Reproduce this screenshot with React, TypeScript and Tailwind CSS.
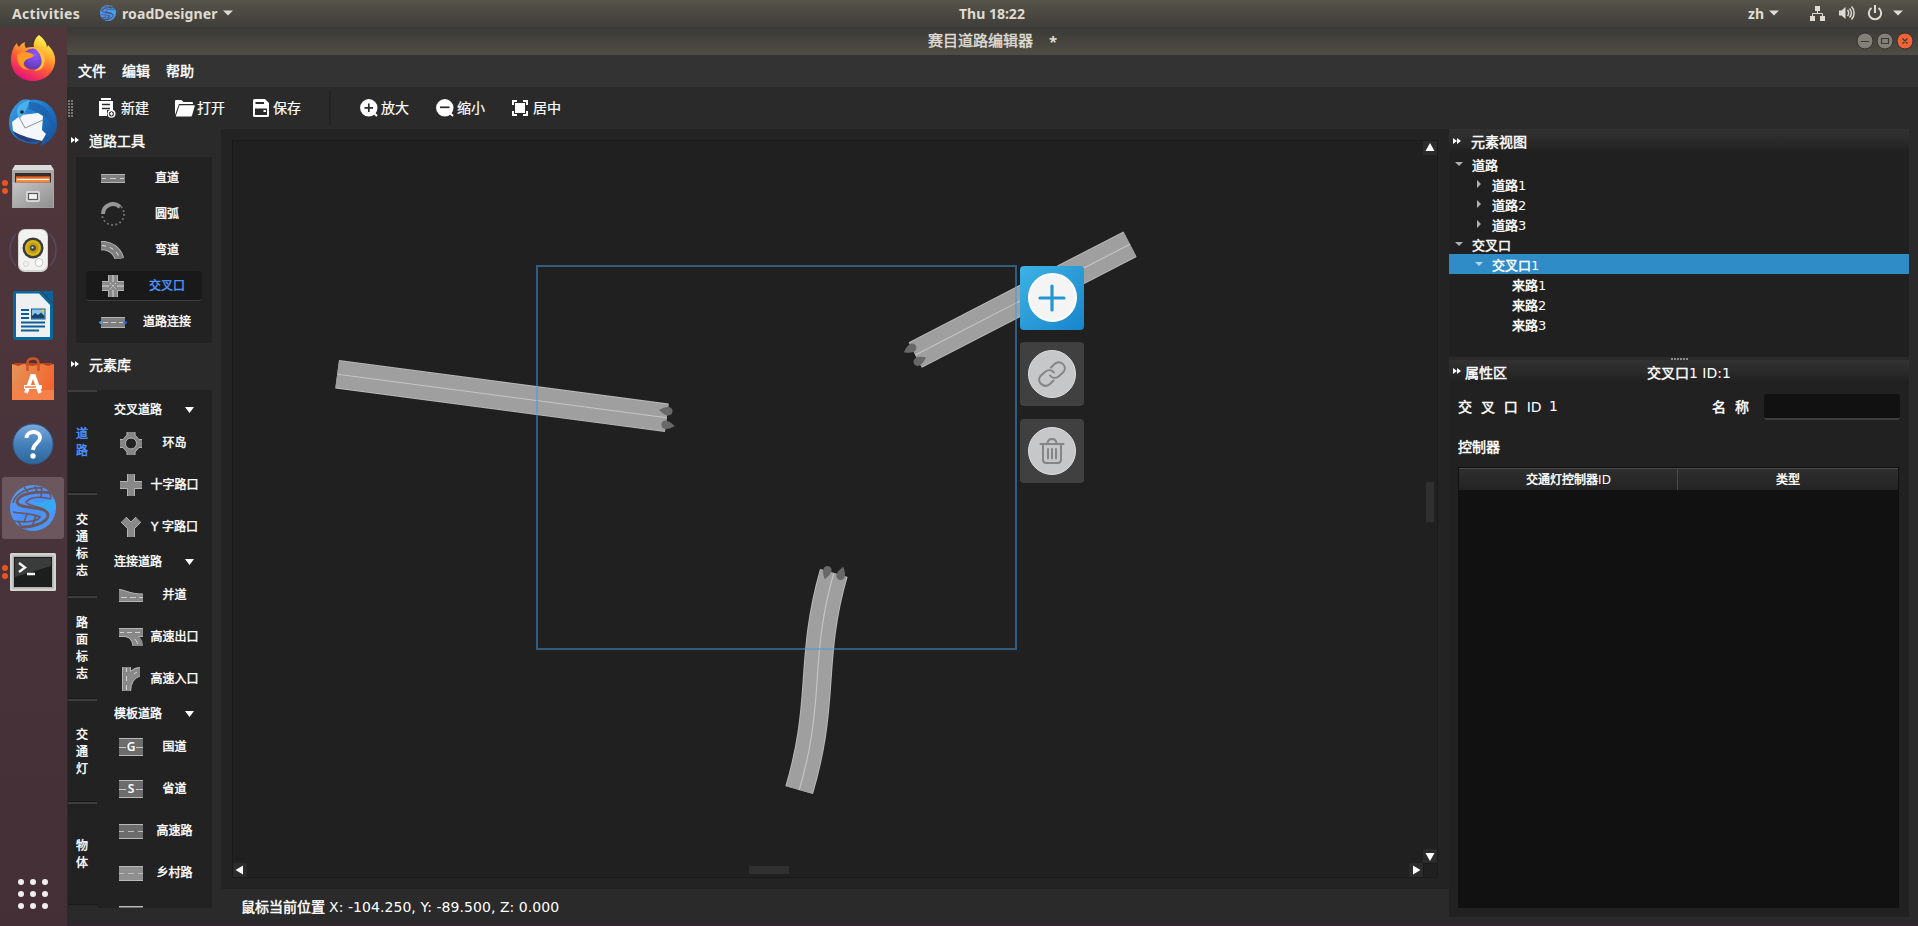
import React from "react";

const CJK = /([\u4e00-\u9fff]+)/;

function Mix({ text }: { text: string }) {
  return (
    <span className="whitespace-pre">
      {text.split(CJK).map((part, i) =>
        CJK.test(part) ? (
          <span key={i} className="[-webkit-text-stroke:0.45px_currentColor]">{part}</span>
        ) : (
          <span key={i}>{part}</span>
        ),
      )}
    </span>
  );
}

function Triangle({ className = "" }: { className?: string }) {
  return (
    <svg className={className} width="10" height="6" viewBox="0 0 10 6">
      <path d="M0 .5H10L5 5.5Z" fill="currentColor" />
    </svg>
  );
}

/* ---------- brand logo ---------- */

function Logo({ size }: { size: number }) {
  const bg = size > 20 ? "#6b575d" : "#4a4740";
  return (
    <svg width={size} height={size} viewBox="0 0 46 46">
      <defs>
        <linearGradient id="lg" x1="0" y1="0" x2="1" y2="1">
          <stop offset="0" stopColor="#5a9cf5" />
          <stop offset="0.5" stopColor="#4b90ff" />
          <stop offset="1" stopColor="#4a9af0" />
        </linearGradient>
        <clipPath id="lc"><circle cx="23" cy="23" r="23" /></clipPath>
      </defs>
      <g clipPath="url(#lc)">
        <rect width="46" height="46" fill="url(#lg)" />
        <path d="M20 17C30 18 38 15 46 14V24L38 27C34 22 26 21 20 17Z" fill="#35a9f4" />
        <g fill="none" stroke={bg}>
          <path d="M46 9C30 5 8 8 7 17C8 25 37 20 38 30C38 38 22 43 6 42" strokeWidth="2.800" />
          <path d="M41 14C30 11 20 12 16 17C18 22 34 21 37 27" strokeWidth="1.600" />
          <path d="M32 3C17 2 5 9 3 18" strokeWidth="1.800" />
          <path d="M3 27C12 29 22 28 30 32C28 36 18 38 3 36" strokeWidth="1.700" />
          <path d="M14 2L18 7M25 1L27 7M32 2L31 12M39 4L41 13M17 29L14 37M26 30L22 42M8 36L12 43" strokeWidth="1.600" />
        </g>
      </g>
    </svg>
  );
}

/* ---------- dock ---------- */

const Firefox = () => (
  <svg width="46" height="48" viewBox="0 0 46 48">
    <defs>
      <linearGradient id="ff" x1="0.8" y1="0.1" x2="0.35" y2="1">
        <stop offset="0" stopColor="#fff44f" />
        <stop offset="0.3" stopColor="#ffb02e" />
        <stop offset="0.6" stopColor="#ff5b36" />
        <stop offset="1" stopColor="#e5107c" />
      </linearGradient>
      <radialGradient id="ffp" cx="0.6" cy="0.3" r="0.8">
        <stop offset="0" stopColor="#9059ff" />
        <stop offset="1" stopColor="#5b33a8" />
      </radialGradient>
    </defs>
    <path d="M29 1C34 5 37 9 37 14C37 12 38 12 38 11C43 16 46 22 45 29C43 40 34 47 23 47C10 47 1 38 1 26C1 18 4 12 7 9C7 11 8 12 9 13C11 10 13 9 15 8C14 11 15 13 16 14C18 13 21 13 24 13C23 8 26 3 29 1Z" fill="url(#ff)" />
    <circle cx="23" cy="25" r="10.500" fill="url(#ffp)" />
    <path d="M7 21C12 17 18 17 24 21C22 25 17 24 15 27C12 30 14 34 20 36C11 36 7 30 7 21Z" fill="#ff9a25" />
    <path d="M24 14C32 15 37 22 34 30C33 35 29 37 24 37C30 34 33 30 31 24C30 19 27 16 24 14Z" fill="#ffbd3e" />
  </svg>
);

const Thunderbird = () => (
  <svg width="48" height="48" viewBox="0 0 48 48">
    <defs>
      <linearGradient id="tb" x1="0" y1="0" x2="1" y2="1">
        <stop offset="0" stopColor="#3ea2e6" />
        <stop offset="0.5" stopColor="#1b76c8" />
        <stop offset="1" stopColor="#1a4a90" />
      </linearGradient>
    </defs>
    <path d="M9 5C13 0 19 1 21 2C36 0 48 10 48 26C48 36 42 44 31 48C33 45 34 42 34 40L28 46C8 45 0 36 0 25C0 16 4 9 9 5Z" fill="url(#tb)" />
    <path d="M20 4C33 4 43 12 45 30C41 22 34 15 20 11Z" fill="#1c5ea8" opacity=".7" />
    <path d="M3 24L12 17 29 15 34 18 33 32 37 36 33 43C20 41 7 37 4 33Z" fill="#f4f6f9" />
    <path d="M4 33C12 38 24 41 33 43L20 44C12 42 6 39 4 33Z" fill="#2a3d78" />
    <path d="M10 19L16 30 34 22" fill="none" stroke="#8a949f" strokeWidth="1" />
    <path d="M10 8C13 4 20 2 21 2C18 9 17 15 11 20C7 18 7 12 10 8Z" fill="#4ab0ea" />
    <circle cx="13" cy="14" r="1.800" fill="#123" />
  </svg>
);

const Files = () => (
  <svg width="44" height="46" viewBox="0 0 44 46">
    <defs>
      <linearGradient id="fl" x1="0" y1="0" x2="1" y2="1">
        <stop offset="0" stopColor="#c4c4c4" />
        <stop offset="1" stopColor="#8f8f8f" />
      </linearGradient>
    </defs>
    <path d="M4 1H40L43 6V44H1V6Z" fill="#dcdcdc" />
    <path d="M1 6H43V44H1Z" fill="#a8a8a8" />
    <rect x="4" y="9" width="36" height="11" fill="#382d2a" />
    <path d="M5 12H39V20H5Z" fill="#c5461b" />
    <path d="M5 13.500H39V18H5Z" fill="#f0873a" />
    <path d="M6 15.500H38" stroke="#fff" strokeWidth="1.200" />
    <rect x="2" y="18.500" width="40" height="25" fill="url(#fl)" />
    <rect x="15" y="27" width="14" height="11" rx="2" fill="#d9d9d9" />
    <rect x="17.500" y="29.500" width="9" height="6" fill="#f3f3f3" stroke="#5a5a5a" strokeWidth="1.200" />
  </svg>
);

const Speaker = () => (
  <svg width="48" height="46" viewBox="0 0 48 46">
    <g fill="none" stroke="#5b5674" strokeWidth="1.500" opacity=".6">
      <path d="M7 6C-1 15-1 29 7 38M4 10C0 17 0 27 4 34M41 6C49 15 49 29 41 38M44 10C48 17 48 27 44 34" />
    </g>
    <rect x="9" y="1" width="30" height="43" rx="7" fill="#d4d4d2" />
    <rect x="10" y="2" width="28" height="40" rx="6" fill="#f2f2f0" />
    <circle cx="24" cy="20" r="10.500" fill="#3c3c3c" />
    <circle cx="24" cy="20" r="8" fill="#d8b614" />
    <circle cx="24" cy="20" r="5.600" fill="#bf9c0f" />
    <circle cx="24" cy="20" r="3" fill="#45484c" />
    <circle cx="23.500" cy="19.500" r="1" fill="#ddd" />
    <circle cx="30" cy="34.500" r="4" fill="#fff" stroke="#c4c4c4" />
    <circle cx="17" cy="36" r="2.500" fill="none" stroke="#d6d6d6" />
  </svg>
);

const Writer = () => (
  <svg width="40" height="49" viewBox="0 0 40 49">
    <path d="M2 0H27L40 13V46A3 3 0 0 1 37 49H3A3 3 0 0 1 0 46V2A2 2 0 0 1 2 0Z" fill="#05689f" />
    <path d="M28 0H40V12Z" fill="#0b6198" />
    <path d="M3 2.500H26L37 14V46H3Z" fill="#eef0f1" />
    <path d="M8 19H16M8 23H16M8 27H16M8 31.500H32M8 35.500H32M8 39.500H26" stroke="#0c5f96" strokeWidth="1.800" />
    <rect x="18.500" y="18" width="13.500" height="10" fill="#8fc4e8" stroke="#0c5f96" />
    <path d="M19 27.500V25L22 22 25 24 28 21.500 31.500 25V27.500Z" fill="#16466b" />
    <circle cx="30" cy="20" r="1.400" fill="#f2c230" />
  </svg>
);

const Software = () => (
  <svg width="42" height="44" viewBox="0 0 42 44">
    <defs>
      <linearGradient id="sw" x1="0" y1="0" x2="1" y2="0.4">
        <stop offset="0" stopColor="#e5955c" />
        <stop offset="1" stopColor="#f1682e" />
      </linearGradient>
    </defs>
    <path d="M2 6H40L42 12H0Z" fill="#bf4415" />
    <path d="M0 7L6 9 12 7 20 9 30 7 36 9 42 7V43H0Z" fill="url(#sw)" />
    <path d="M0 33H42V43H0Z" fill="#f4824a" />
    <path d="M15.500 14V6C15.500 0 26.500 0 26.500 6V14" fill="none" stroke="#cf5426" strokeWidth="2.600" />
    <path d="M14 36L20 19H22L28 36M12 30H30" fill="none" stroke="#fff" strokeWidth="3.800" />
    <path d="M13 30H24" stroke="#e9622d" strokeWidth="1.300" />
  </svg>
);

const Help = () => (
  <svg width="42" height="42" viewBox="0 0 42 42">
    <defs>
      <linearGradient id="hp" x1="0" y1="0" x2="0" y2="1">
        <stop offset="0" stopColor="#7ba9dc" />
        <stop offset="0.5" stopColor="#4581bb" />
        <stop offset="1" stopColor="#2d659a" />
      </linearGradient>
    </defs>
    <circle cx="21" cy="21" r="20" fill="url(#hp)" stroke="#2c5f8e" />
    <path d="M14.500 15C14.500 7 28.500 7 28 15C28 20 21.500 20 21 27" fill="none" stroke="#fff" strokeWidth="3.800" />
    <circle cx="21" cy="33" r="2.700" fill="#fff" />
  </svg>
);

const Terminal = () => (
  <svg width="46" height="38" viewBox="0 0 46 38">
    <rect width="46" height="38" rx="1.500" fill="#d3d3cf" />
    <rect x="2.500" y="2.500" width="41" height="33" fill="#b0b0ac" />
    <rect x="4" y="4" width="38" height="30" fill="#1c1e1e" />
    <path d="M5 5H41V13L5 24Z" fill="#3a3c3c" />
    <path d="M9 10L15 14.500 9 19M17 21H25" fill="none" stroke="#f3f3f3" strokeWidth="2.400" />
  </svg>
);

const dockItems: { icon: React.ReactNode; dots: number; active?: boolean }[] = [
  { icon: <Firefox />, dots: 0 },
  { icon: <Thunderbird />, dots: 0 },
  { icon: <Files />, dots: 2 },
  { icon: <Speaker />, dots: 0 },
  { icon: <Writer />, dots: 0 },
  { icon: <Software />, dots: 0 },
  { icon: <Help />, dots: 0 },
  { icon: <Logo size={46} />, dots: 1, active: true },
  { icon: <Terminal />, dots: 2 },
];

function Dock() {
  return (
    <aside className="flex w-[67px] shrink-0 flex-col bg-linear-to-b from-[#51373b] via-[#49343b] to-[#442f36]">
      <div className="-mt-px flex flex-col">
        {dockItems.map((d, i) => (
          <div key={i} className="flex h-[64.25px] shrink-0 items-center">
            <div className="flex w-0 flex-col items-start gap-[2px]">
              {Array.from({ length: d.dots }).map((_, k) => (
                <i key={k} className="ml-[2px] size-[6px] shrink-0 rounded-full bg-[#e95420]" />
              ))}
            </div>
            <div className={`ml-[2px] flex size-[62px] items-center justify-center rounded-[3px] ${d.active ? "bg-[#6b575d]" : ""}`}>
              {d.icon}
            </div>
          </div>
        ))}
      </div>
      <div className="mt-auto mb-[17px] ml-[18px] grid w-[30px] grid-cols-3 gap-[6px]">
        {Array.from({ length: 9 }).map((_, k) => (
          <i key={k} className="size-[6px] rounded-full bg-[#f0eeee]" />
        ))}
      </div>
    </aside>
  );
}

/* ---------- road glyphs ---------- */

const G = "#7f7f7f";
const E = "#b4b4b4";

const roadIcons: Record<string, React.ReactNode> = {
  straight: (
    <svg width="24" height="9" viewBox="0 0 24 9">
      <rect width="24" height="9" fill={G} />
      <path d="M0 .5H24M0 8.500H24" stroke={E} />
      <path d="M1 4.500H5M9 4.500H15M19 4.500H23" stroke="#d0d0d0" />
    </svg>
  ),
  arc: (
    <svg width="24" height="24" viewBox="0 0 24 24" fill="none">
      <circle cx="12" cy="12" r="11" stroke="#777" strokeWidth="1.800" strokeDasharray="1.800 2.520" />
      <path d="M2 12A10 10 0 0 1 19 5" stroke="#222" strokeWidth="6" />
      <path d="M2 12A10 10 0 0 1 19 5" stroke="#979797" strokeWidth="4" />
    </svg>
  ),
  curve: (
    <svg width="24" height="18" viewBox="0 0 24 18" fill="none">
      <path d="M0 4.500C9 4.500 16 9 18.500 18" stroke={E} strokeWidth="9.500" />
      <path d="M0 4.500C9 4.500 16 9 18.500 18" stroke={G} strokeWidth="7.600" />
      <path d="M1 4.500C9 5 15 9 17.500 15" stroke="#ddd" strokeDasharray="4 4" />
    </svg>
  ),
  cross: (
    <svg width="22" height="22" viewBox="0 0 22 22">
      <path d="M6 0H16V6H22V16H16V22H6V16H0V6H6Z" fill="#8a8a8a" />
      <path d="M11 0V7M11 15V22M0 11H7M15 11H22" stroke="#d8d8d8" />
      <path d="M6.500 0V6.500H0M15.500 0V6.500H22M6.500 22V15.500H0M15.500 22V15.500H22" stroke="#b4b4b4" fill="none" />
      <path d="M8 8L14 14M14 8L8 14" stroke="#d0d0d0" strokeDasharray="1.500 1" />
    </svg>
  ),
  connect: (
    <svg width="28" height="11" viewBox="0 0 28 11">
      <rect x="2" width="24" height="11" fill={G} />
      <path d="M2 .5H26M2 10.500H26" stroke={E} />
      <path d="M4 5.500H9M12 5.500H17M20 5.500H24" stroke="#d0d0d0" />
      <circle cx="1.800" cy="5.500" r="1.600" fill="#3ea0f5" />
      <circle cx="26.300" cy="5.500" r="1.600" fill="#2569f0" />
    </svg>
  ),
  roundabout: (
    <svg width="22" height="23" viewBox="0 0 22 23">
      <path d="M7 0H15V3L19 7.500H22V15.500H19L15 20V23H7V20L3 15.500H0V7.500H3L7 3Z" fill="#858585" />
      <path d="M7 0V3L3 7.500H0M15 0V3L19 7.500H22M22 15.500H19L15 20V23M0 15.500H3L7 20V23" fill="none" stroke={E} />
      <circle cx="11" cy="11.500" r="5.500" fill="#222" stroke={E} />
    </svg>
  ),
  plus: (
    <svg width="22" height="22" viewBox="0 0 22 22">
      <path d="M7 0H15V7H22V15H15V22H7V15H0V7H7Z" fill="#888" />
      <path d="M7.500 0V7.500H0M14.500 0V7.500H22M7.500 22V14.500H0M14.500 22V14.500H22" stroke={E} fill="none" />
    </svg>
  ),
  wye: (
    <svg width="20" height="20" viewBox="0 0 20 20">
      <path d="M0 5L5 0 10 5 15 0 20 5 14 11V20H6V11Z" fill="#888" />
      <path d="M0 5L6.500 11.500V20M20 5L13.500 11.500V20M5 0L10 5 15 0" stroke={E} fill="none" />
    </svg>
  ),
  merge: (
    <svg width="24" height="13" viewBox="0 0 24 13">
      <path d="M0 0C8 1 11 5 24 5V13H0Z" fill="#888" />
      <path d="M0 .5C8 1.500 11 5 24 5M0 12.500H24" stroke={E} fill="none" />
      <path d="M2 8.500H8M11 8.500H17M20 8.500H24" stroke="#ccc" />
    </svg>
  ),
  exit: (
    <svg width="24" height="18" viewBox="0 0 24 18">
      <path d="M0 0H24V8.500H20Q24 12 24 18H14Q13 10 6 9H0Z" fill="#888" />
      <path d="M0 .5H24M0 8.500H7Q13 10 14 18M19 8.500H24" stroke={E} fill="none" />
      <path d="M1 4.500H5M8 4.500H13M16 4.500H21M16 11L19 16" stroke="#d4d4d4" />
    </svg>
  ),
  entry: (
    <svg width="18" height="24" viewBox="0 0 18 24">
      <path d="M0 0H9V4Q12 0 18 0V9Q9 12 9 24H0Z" fill="#888" />
      <path d="M.5 0V24M8.500 0V5M8.500 24Q9 12 18 9M9 4Q12 1 18 .5" stroke={E} fill="none" />
      <path d="M4.500 1V5M4.500 9V14M4.500 18V23M12 7L15 5" stroke="#d4d4d4" />
    </svg>
  ),
};

function Plate({ letter, tall, light }: { letter?: string; tall?: boolean; light?: boolean }) {
  return (
    <div
      className={`flex w-[24px] items-center justify-center border-y border-[#b9b9b9] ${tall ? "h-[18px]" : "h-[15px]"} ${light ? "bg-[#8f8f8f]" : "bg-[#6c6c6c]"}`}
    >
      {letter ? (
        <>
          <i className="h-px flex-1 bg-[#c8c8c8]" />
          <span className="w-[10px] text-center font-['Noto_Sans'] text-[12px] leading-none font-semibold text-white [-webkit-text-stroke:0px]">{letter}</span>
          <i className="h-px flex-1 bg-[#c8c8c8]" />
        </>
      ) : (
        <span className="flex w-full justify-between">
          <i className="h-px w-[5px] bg-[#bdbdbd]" />
          <i className="h-px w-[6px] bg-[#bdbdbd]" />
          <i className="h-px w-[5px] bg-[#bdbdbd]" />
        </span>
      )}
    </div>
  );
}

/* ---------- left panel ---------- */

function Chevrons() {
  return (
    <svg width="8" height="6" viewBox="0 0 8 6" fill="#fff">
      <path d="M0 0L4 3 0 6ZM4 0L8 3 4 6Z" />
    </svg>
  );
}

const tools = [
  { icon: "straight", label: "直道" },
  { icon: "arc", label: "圆弧" },
  { icon: "curve", label: "弯道" },
  { icon: "cross", label: "交叉口", on: true },
  { icon: "connect", label: "道路连接" },
];

const groups: { title: string; items: [React.ReactNode, string][] }[] = [
  {
    title: "交叉道路",
    items: [
      [roadIcons.roundabout, "环岛"],
      [roadIcons.plus, "十字路口"],
      [roadIcons.wye, "Y 字路口"],
    ],
  },
  {
    title: "连接道路",
    items: [
      [roadIcons.merge, "并道"],
      [roadIcons.exit, "高速出口"],
      [roadIcons.entry, "高速入口"],
    ],
  },
  {
    title: "模板道路",
    items: [
      [<Plate letter="G" tall />, "国道"],
      [<Plate letter="S" tall />, "省道"],
      [<Plate />, "高速路"],
      [<Plate light />, "乡村路"],
      [<Plate tall />, ""],
    ],
  },
];

const tabs = ["道路", "交通标志", "路面标志", "交通灯", "物体"];

function LeftPanel() {
  return (
    <div className="flex w-[154px] shrink-0 flex-col bg-[#2a2a2a] [-webkit-text-stroke:0.4px_currentColor]">
      <div className="flex h-[28px] items-center pb-[6px] pl-[4px] text-[14px]">
        <Chevrons />
        <span className="mt-px ml-[10px] leading-none">道路工具</span>
      </div>
      <div className="ml-[9px] flex h-[186px] w-[136px] flex-col bg-[#222] pt-[3px]">
        {tools.map((t) => (
          <div key={t.label} className="flex h-[36px] shrink-0 items-center px-[10px]">
            <div
              className={`flex h-[30px] w-[116px] items-center rounded-[4px] ${t.on ? "border-b border-[#3d3d3d] bg-[#191919] text-[#4d96ff]" : ""}`}
            >
              <span className="ml-[13px] flex w-[28px] justify-center">{roadIcons[t.icon]}</span>
              <span className="ml-[10px] w-[60px] text-center text-[12px] leading-none">{t.label}</span>
            </div>
          </div>
        ))}
      </div>
      <div className="flex h-[47px] items-center pb-[5px] pl-[4px] text-[14px]">
        <Chevrons />
        <span className="mt-px ml-[10px] leading-none">元素库</span>
      </div>
      <div className="ml-[1px] flex h-[518px]">
        <div className="flex w-[29px] flex-col">
          {tabs.map((t, i) => (
            <div
              key={t}
              className={`flex h-[103px] shrink-0 flex-col items-center justify-center border-t-2 border-b border-t-[#3d3d3d] border-b-[#191919] bg-[#222] pt-[2px] pr-px text-[12px] leading-[17px] ${i === 0 ? "text-[#4d96ff]" : ""}`}
            >
              {t.split("").map((c) => (
                <span key={c}>{c}</span>
              ))}
            </div>
          ))}
        </div>
        <div className="w-[115px] overflow-hidden bg-[#222] pt-[7px]">
          {groups.map((g) => (
            <div key={g.title}>
              <div className="flex h-[25px] items-center pl-[17px] text-[12px]">
                <span className="leading-none">{g.title}</span>
                <svg className="ml-[23px]" width="9" height="6" viewBox="0 0 9 6">
                  <path d="M0 0H9L4.500 6Z" fill="#fff" />
                </svg>
              </div>
              <div className="mb-px">
                {g.items.map(([icon, label], i) => (
                  <div key={i} className="flex h-[42px] items-center">
                    <span className="ml-[20px] flex w-[28px] justify-center">{icon}</span>
                    <span className="ml-px w-[57px] text-center text-[12px] leading-none whitespace-pre">
                      {label}
                    </span>
                  </div>
                ))}
              </div>
            </div>
          ))}
        </div>
      </div>
    </div>
  );
}

/* ---------- canvas ---------- */

function Road({ d }: { d: string }) {
  return (
    <g fill="none">
      <path d={d} stroke="#bcbcbc" strokeWidth="28.800" />
      <path d={d} stroke="#9f9f9f" strokeWidth="27" />
      <path d={d} stroke="#c6c6c6" strokeWidth="1.100" />
    </g>
  );
}

function Drop({ x, y, a }: { x: number; y: number; a: number }) {
  return (
    <path
      transform={`translate(${x} ${y}) rotate(${a})`}
      d="M8 0C4 -3 1 -4.400 -1.500 -4.200C-7 -4 -7 4 -1.500 4.200C1 4.400 4 3 8 0Z"
      fill="#686868"
    />
  );
}

function Canvas() {
  return (
    <div className="relative h-[760px] w-[1228px] bg-[#232323]">
      <svg width="1228" height="760" viewBox="221 129 1228 760">
        <rect x="232.500" y="140.500" width="1205" height="737" fill="#202020" stroke="#191919" />
        <Road d="M337.200 374.200L666.800 417.800" />
        <Road d="M915.300 355L1130 244.200" />
        <Road d="M833.800 573C821 617 819 652 817 682C814.500 720 811 750 799.200 790" />
        <Drop x={667} y={411} a={188} />
        <Drop x={667} y={425} a={8} />
        <Drop x={911} y={348.5} a={153} />
        <Drop x={919} y={361} a={-27} />
        <Drop x={827} y={571.5} a={106} />
        <Drop x={841} y={574.5} a={-74} />
        <rect x="537" y="266" width="479" height="383" fill="none" stroke="#3f99e0" strokeOpacity=".5" strokeWidth="2" />
        <g fill="#2b2b2b">
          <rect x="1423" y="141" width="14" height="14" />
          <rect x="1423" y="849" width="14" height="14" />
          <rect x="1409" y="863" width="14" height="14" />
          <rect x="233" y="863" width="14" height="14" />
        </g>
        <g fill="#303030">
          <rect x="1426" y="482" width="8" height="40" />
          <rect x="749" y="866" width="40" height="8" />
        </g>
        <g fill="#fff">
          <path d="M1425.500 151L1430 143 1434.500 151Z" />
          <path d="M1425.500 853L1430 861 1434.500 853Z" />
          <path d="M1413 865.500L1420.500 870 1413 874.500Z" />
          <path d="M243 865.500L235.500 870 243 874.500Z" />
        </g>
        <path d="M1423.500 877V863.500H1437" fill="none" stroke="#191919" />
      </svg>
      <div className="absolute top-[136.5px] left-[799.4px] flex flex-col gap-[12.8px]">
        <div className="flex size-[64px] items-center justify-center rounded-[4px] bg-linear-to-br from-[#3db2e4] to-[#1785cb]">
          <div className="flex size-[49px] items-center justify-center rounded-full border-2 border-white bg-[#f4f4f5]">
            <svg width="28" height="28" viewBox="0 0 28 28">
              <path d="M14 2V26M2 14H26" stroke="#2196d3" strokeWidth="3.200" strokeLinecap="round" />
            </svg>
          </div>
        </div>
        <div className="flex size-[64px] items-center justify-center rounded-[4px] bg-[#404040]">
          <div className="flex size-[48px] items-center justify-center rounded-full border border-[#e0e0e0] bg-[#c6c7c9]">
            <svg width="28" height="28" viewBox="0 0 28 28" fill="none" stroke="#858585" strokeWidth="2" strokeLinecap="round">
              <path d="M13 7.500L16.500 4C22 -1 30 6 25.500 12L20.500 16.500C17.500 18.800 14 18 12 15.500" />
              <path d="M15.500 20.500L12 24C6 29 -2 22 2.500 16L7.500 11.500C10.500 9.200 14 10 16 12.500" />
            </svg>
          </div>
        </div>
        <div className="flex size-[64px] items-center justify-center rounded-[4px] bg-[#404040]">
          <div className="flex size-[48px] items-center justify-center rounded-full border border-[#e0e0e0] bg-[#c6c7c9]">
            <svg width="26" height="28" viewBox="0 0 26 28" fill="none" stroke="#858585" strokeWidth="2" strokeLinecap="round">
              <path d="M1.500 7H24.500M4 7V22.500Q4 26 7.500 26H18.500Q22 26 22 22.500V7M8.500 6.500C9 .5 17 .5 17.500 6.500" />
              <path d="M9 12V21.500M13 12V21.500M17 12V21.500" />
            </svg>
          </div>
        </div>
      </div>
    </div>
  );
}

/* ---------- right panel ---------- */

const tree = [
  { label: "道路", depth: 0, mark: "down" },
  { label: "道路1", depth: 1, mark: "right" },
  { label: "道路2", depth: 1, mark: "right" },
  { label: "道路3", depth: 1, mark: "right" },
  { label: "交叉口", depth: 0, mark: "down" },
  { label: "交叉口1", depth: 1, mark: "down", on: true },
  { label: "来路1", depth: 2, mark: "" },
  { label: "来路2", depth: 2, mark: "" },
  { label: "来路3", depth: 2, mark: "" },
];

const depthPad = ["pl-[6px]", "pl-[26px]", "pl-[46px]"];

function RightPanel() {
  return (
    <div className="flex h-[788px] w-[460px] shrink-0 flex-col bg-[#212121]">
      <div className="flex h-[25px] shrink-0 items-center bg-linear-to-b from-[#323232] via-[#2a2a2a] to-[#1f1f1f] pl-[4px] text-[14px]">
        <span className="mb-[2px]"><Chevrons /></span>
        <span className="mt-px ml-[10px] leading-none"><Mix text="元素视图" /></span>
      </div>
      <div className="h-[203px] bg-[#202020]">
        {tree.map((n) => (
          <div
            key={n.label}
            className={`flex h-[20px] items-center text-[13px] ${depthPad[n.depth]} ${n.on ? "bg-[#308cc6]" : ""}`}
          >
            <span className={`mb-[1px] flex w-[8px] justify-center ${n.on ? "text-[#b6d6ec]" : "text-[#b0b0b0]"}`}>
              {n.mark === "down" && (
                <svg width="8" height="4" viewBox="0 0 8 4"><path d="M0 0H8L4 4Z" fill="currentColor" /></svg>
              )}
              {n.mark === "right" && (
                <svg width="4" height="8" viewBox="0 0 4 8"><path d="M0 0V8L4 4Z" fill="currentColor" /></svg>
              )}
            </span>
            <span className="mt-[2px] ml-[9px] leading-none"><Mix text={n.label} /></span>
          </div>
        ))}
      </div>
      <div className="flex h-[3px] shrink-0 justify-center gap-px bg-[#2a2a2a] pt-px">
        {[0, 1, 2, 3, 4, 5].map((k) => (
          <i key={k} className="h-[2px] w-[2px] bg-[#8a8a8a]" />
        ))}
      </div>
      <div className="flex h-[24px] shrink-0 items-center bg-linear-to-b from-[#323232] via-[#2a2a2a] to-[#1f1f1f] pl-[4px] text-[14px]">
        <span className="mb-[2px]"><Chevrons /></span>
        <span className="mt-px ml-[4px] w-[182px] leading-none"><Mix text="属性区" /></span>
        <span className="mt-px leading-none"><Mix text="交叉口1 ID:1" /></span>
      </div>
      <div className="flex h-[46px] shrink-0 items-center pb-px pl-[9px] text-[14px]">
        <span className="w-[91px] leading-none"><Mix text="交  叉  口  ID" /></span>
        <span className="mb-px w-[163px] leading-none">1</span>
        <span className="w-[52px] leading-none"><Mix text="名  称" /></span>
        <span className="h-[26px] w-[136px] rounded-[3px] border-b-2 border-[#3f3f3f] bg-[#111]" />
      </div>
      <div className="flex h-[37px] shrink-0 items-center pb-[4px] pl-[9px] text-[14px] leading-none"><Mix text="控制器" /></div>
      <div className="ml-[9px] flex h-[441px] w-[441px] flex-col border border-[#101010] bg-[#111]">
        <div className="flex h-[22px] border-t border-[#4a4a4a] bg-linear-to-b from-[#2e2e2e] to-[#242424] text-[12px]">
          <span className="flex w-[219px] items-center justify-center border-r border-[#4a4a4a] pl-px"><Mix text="交通灯控制器ID" /></span>
          <span className="flex flex-1 items-center justify-center"><Mix text="类型" /></span>
        </div>
      </div>
    </div>
  );
}

/* ---------- toolbar ---------- */

const NewIcon = () => (
  <svg width="17" height="20" viewBox="0 0 17 20">
    <path d="M2 0H12V2H2Z" fill="#fff" />
    <path d="M0 3H14V12H8V18H0Z" fill="#fff" />
    <path d="M3 6.500H11M3 10.500H11" stroke="#2a2a2a" strokeWidth="1.400" />
    <circle cx="12.500" cy="15.800" r="3.300" fill="#2a2a2a" stroke="#fff" strokeWidth="1.400" />
    <path d="M12.500 14V17.600M10.700 15.800H14.300" stroke="#fff" strokeWidth="1.300" />
  </svg>
);
const OpenIcon = () => (
  <svg width="20" height="17" viewBox="0 0 20 17">
    <path d="M0 1Q0 0 1 0H6.500L8.500 2H17Q18 2 18 3V4H4L0 15Z" fill="#fff" />
    <path d="M4.500 5.300H19.300Q20 5.300 19.800 6L17 15.500Q16.700 16.500 16 16.500H1.500Q.5 16.500 1 15.500Z" fill="#fff" />
  </svg>
);
const SaveIcon = () => (
  <svg width="16" height="18" viewBox="0 0 16 18">
    <path d="M1.500 0H12L16 4V16.500Q16 18 14.500 18H1.500Q0 18 0 16.500V1.500Q0 0 1.500 0Z" fill="#fff" />
    <path d="M2.500 3H11V5H2.500ZM2 9.500H14V16H2Z" fill="#2a2a2a" />
    <path d="M10.500 11H13V13H10.500Z" fill="#fff" />
  </svg>
);
const ZoomIcon = ({ plus }: { plus?: boolean }) => (
  <svg width="18" height="18" viewBox="0 0 18 18">
    <circle cx="8.800" cy="8.800" r="8.700" fill="#fff" />
    <path d="M14 14L17 17" stroke="#fff" strokeWidth="2" />
    <path d={plus ? "M8.800 4.500V13M4.500 8.800H13" : "M4 8.300H13.500"} stroke="#2a2a2a" strokeWidth="1.700" />
  </svg>
);
const FitIcon = () => (
  <svg width="16" height="16" viewBox="0 0 16 16">
    <path d="M1 5V1H5M11 1H15V5M15 11V15H11M5 15H1V11" fill="none" stroke="#fff" strokeWidth="2" />
    <rect x="3" y="3" width="10" height="10" fill="#fff" />
  </svg>
);

function Toolbar() {
  return (
    <div className="flex h-[42px] shrink-0 items-center bg-[#2a2a2a] text-[14px] [-webkit-text-stroke:0.2px_currentColor]">
      <div className="ml-px grid w-[5px] grid-cols-2 gap-px">
        {Array.from({ length: 12 }).map((_, k) => (
          <i key={k} className="size-[2px] bg-[#777]" />
        ))}
      </div>
      <span className="ml-[26px] flex w-[76px] items-center gap-[5px]"><NewIcon />新建</span>
      <span className="flex w-[78px] items-center gap-[2px]"><OpenIcon />打开</span>
      <span className="flex w-[76px] items-center gap-[4px]"><SaveIcon />保存</span>
      <i className="h-[34px] w-[2px] bg-[#222]" />
      <span className="ml-[29px] flex w-[76px] items-center gap-[3px]"><ZoomIcon plus />放大</span>
      <span className="flex w-[76px] items-center gap-[3px]"><ZoomIcon />缩小</span>
      <span className="flex items-center gap-[5px]"><FitIcon />居中</span>
    </div>
  );
}

export default function App() {
  return (
    <div className="flex h-[926px] w-[1918px] flex-col overflow-hidden bg-[#2a2a2a] font-['DejaVu_Sans','Noto_Sans_CJK_SC',sans-serif] text-white">
      <header className="flex h-[27px] shrink-0 items-center bg-linear-to-b from-[#57534a] to-[#3f3e39] pb-px font-['Noto_Sans',sans-serif] text-[14px] font-bold text-[#dfdbd2]">
        <div className="flex w-[959px] items-center">
          <span className="ml-[12px] w-[88px] tracking-[0.3px]">Activities</span>
          <Logo size={16} />
          <span className="ml-[6px] w-[101px] tracking-[0.1px]">roadDesigner</span>
          <Triangle />
        </div>
        <span>Thu 18:22</span>
        <div className="flex flex-1 items-center justify-end">
          <span className="mr-[5px]">zh</span>
          <Triangle />
          <svg className="ml-[30px]" width="17" height="16" viewBox="0 0 17 16" fill="#dfdbd2">
            <path d="M6 1H11V6H6ZM1 11H6V16H1ZM11 11H16V16H11Z" />
            <path d="M8.500 6V8.500M3.500 11V8.500H13.500V11" fill="none" stroke="#dfdbd2" />
          </svg>
          <svg className="ml-[12px]" width="17" height="16" viewBox="0 0 17 16" fill="none" stroke="#dfdbd2" strokeWidth="1.500">
            <path d="M1 5.500H3.500L7.500 2V14L3.500 10.500H1Z" fill="#dfdbd2" stroke="none" />
            <path d="M9.500 5C11 6.500 11 9.500 9.500 11M11.500 3.500C14 6 14 10 11.500 12.500M13.500 1.500C17 5 17 11 13.500 14.500" />
          </svg>
          <svg className="ml-[12px]" width="16" height="16" viewBox="0 0 16 16" fill="none" stroke="#dfdbd2" strokeWidth="2">
            <path d="M4.500 3A6.200 6.200 0 1 0 11.500 3M8 0V8" />
          </svg>
          <Triangle className="mr-[15px] ml-[10px]" />
        </div>
      </header>
      <div className="flex h-[899px]">
        <Dock />
        <div className="flex w-[1851px] flex-col">
          <div className="flex h-[28px] shrink-0 items-center bg-linear-to-b from-[#3a3935] to-[#504d46] text-[15px] text-[#dfdbd2]">
            <span className="ml-[861px] leading-none"><Mix text="赛目道路编辑器" /></span>
            <span className="ml-[16px] font-['Noto_Sans'] leading-none font-bold">*</span>
            <svg className="mr-[4px] ml-auto" width="58" height="18" viewBox="0 0 58 18" fill="none">
              <circle cx="9" cy="9" r="8" fill="#83807a" stroke="#33322e" />
              <circle cx="29" cy="9" r="8" fill="#83807a" stroke="#33322e" />
              <circle cx="49" cy="9" r="8" fill="#ee6437" stroke="#33322e" />
              <path d="M5 9.500H13M25.500 6.500H32.500V11.500H25.500ZM46.500 6.500L51.500 11.500M51.500 6.500L46.500 11.500" stroke="#3b3a35" strokeWidth="1.200" />
            </svg>
          </div>
          <nav className="flex h-[32px] shrink-0 items-center gap-[16px] bg-[#333] pt-px pl-[11px] text-[14px] [-webkit-text-stroke:0.45px_currentColor]">
            <span>文件</span>
            <span>编辑</span>
            <span>帮助</span>
          </nav>
          <Toolbar />
          <div className="flex h-[796px]">
            <LeftPanel />
            <div className="flex w-[1228px] shrink-0 flex-col">
              <Canvas />
              <div className="flex h-[36px] items-center pl-[20px] text-[14px] leading-none">
                <Mix text="鼠标当前位置" />
                <span className="ml-[4px] tracking-[0.06px]">X: -104.250, Y: -89.500, Z: 0.000</span>
              </div>
            </div>
            <RightPanel />
          </div>
          <div className="h-px bg-[#38242f]" />
        </div>
      </div>
    </div>
  );
}
